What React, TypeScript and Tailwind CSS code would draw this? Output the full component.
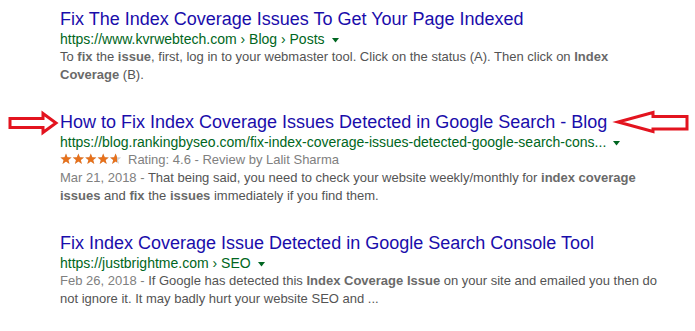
import React from 'react';

const font = "font-['Liberation_Sans',Arial,sans-serif]";

const Caret = () => (
  <svg width="7" height="5" viewBox="0 0 7 5" className="ml-[7px] inline-block align-middle">
    <path d="M0 0 L7 0 L3.5 4.5 Z" fill="#006621" />
  </svg>
);

const Stars = ({ rating }: { rating: number }) => {
  const star = 'M6 0.5 L7.5 4.3 L11.6 4.4 L8.4 6.9 L9.5 10.9 L6 8.6 L2.5 10.9 L3.6 6.9 L0.4 4.4 L4.5 4.3 Z';
  return (
    <svg width="62" height="12" viewBox="0 0 62 12" className="mr-[6px] inline-block align-[-1px]">
      <defs>
        <clipPath id="fill">
          <rect x="0" y="0" width={(rating / 5) * 62} height="12" />
        </clipPath>
      </defs>
      {[0, 1, 2, 3, 4].map(i => (
        <path key={'g' + i} d={star} transform={`translate(${i * 12.4} 0)`} fill="#d0d0d0" />
      ))}
      <g clipPath="url(#fill)">
        {[0, 1, 2, 3, 4].map(i => (
          <path key={'o' + i} d={star} transform={`translate(${i * 12.4} 0)`} fill="#e7711b" />
        ))}
      </g>
    </svg>
  );
};

const B = ({ children }: { children: React.ReactNode }) => (
  <b className="font-bold text-[#6a6a6a]">{children}</b>
);

const App: React.FC = () => {
  return (
    <div className={`relative w-[695px] h-[331px] overflow-hidden bg-white ${font}`}>
      <div className="pl-[60px] pt-[7px] w-[662px]">
        {/* Result 1 */}
        <div className="mb-[26px]">
          <div className="text-[18px] leading-[24px] text-[#1a0dab]">Fix The Index Coverage Issues To Get Your Page Indexed</div>
          <div className="text-[14px] leading-[17px] text-[#006621]">
            https://www.kvrwebtech.com › Blog › Posts<Caret />
          </div>
          <div className="text-[13px] leading-[18px] text-[#545454]">
            To <B>fix</B> the <B>issue</B>, first, log in to your webmaster tool. Click on the status (A). Then click on <B>Index Coverage</B> (B).
          </div>
        </div>

        {/* Result 2 */}
        <div className="mb-[26px]">
          <div className="text-[18px] leading-[24px] text-[#1a0dab]">How to Fix Index Coverage Issues Detected in Google Search - Blog</div>
          <div className="text-[14px] leading-[17px] text-[#006621]">
            https://blog.rankingbyseo.com/fix-index-coverage-issues-detected-google-search-cons...<Caret />
          </div>
          <div className="text-[13px] leading-[18px] text-[#808080]">
            <Stars rating={4.6} />Rating: 4.6 - Review by Lalit Sharma
          </div>
          <div className="text-[13px] leading-[18px] text-[#545454]">
            <span className="text-[#808080]">Mar 21, 2018 - </span>That being said, you need to check your website weekly/monthly for <B>index coverage issues</B> and <B>fix</B> the <B>issues</B> immediately if you find them.
          </div>
        </div>

        {/* Result 3 */}
        <div>
          <div className="text-[18px] leading-[24px] text-[#1a0dab]">Fix Index Coverage Issue Detected in Google Search Console Tool</div>
          <div className="text-[14px] leading-[17px] text-[#006621]">
            https://justbrightme.com › SEO<Caret />
          </div>
          <div className="text-[13px] leading-[18px] text-[#545454]">
            <span className="text-[#808080]">Feb 26, 2018 - </span>If Google has detected this <B>Index Coverage Issue</B> on your site and emailed you then do not ignore it. It may badly hurt your website SEO and ...
          </div>
        </div>
      </div>

      {/* Red annotation arrows */}
      <svg className="absolute left-0 top-0 pointer-events-none" width="695" height="331" viewBox="0 0 695 331">
        <polygon
          points="10,118.5 43,118.5 43,113.5 56,123 43,132.5 43,127.5 10,127.5"
          fill="none"
          stroke="#e3141f"
          strokeWidth="3"
          strokeLinejoin="miter"
        />
        <polygon
          points="687,116.5 653,116.5 653,112.5 618,122 653,131.5 653,129 687,129"
          fill="none"
          stroke="#e3141f"
          strokeWidth="3"
          strokeLinejoin="miter"
        />
      </svg>
    </div>
  );
};

export default App;
